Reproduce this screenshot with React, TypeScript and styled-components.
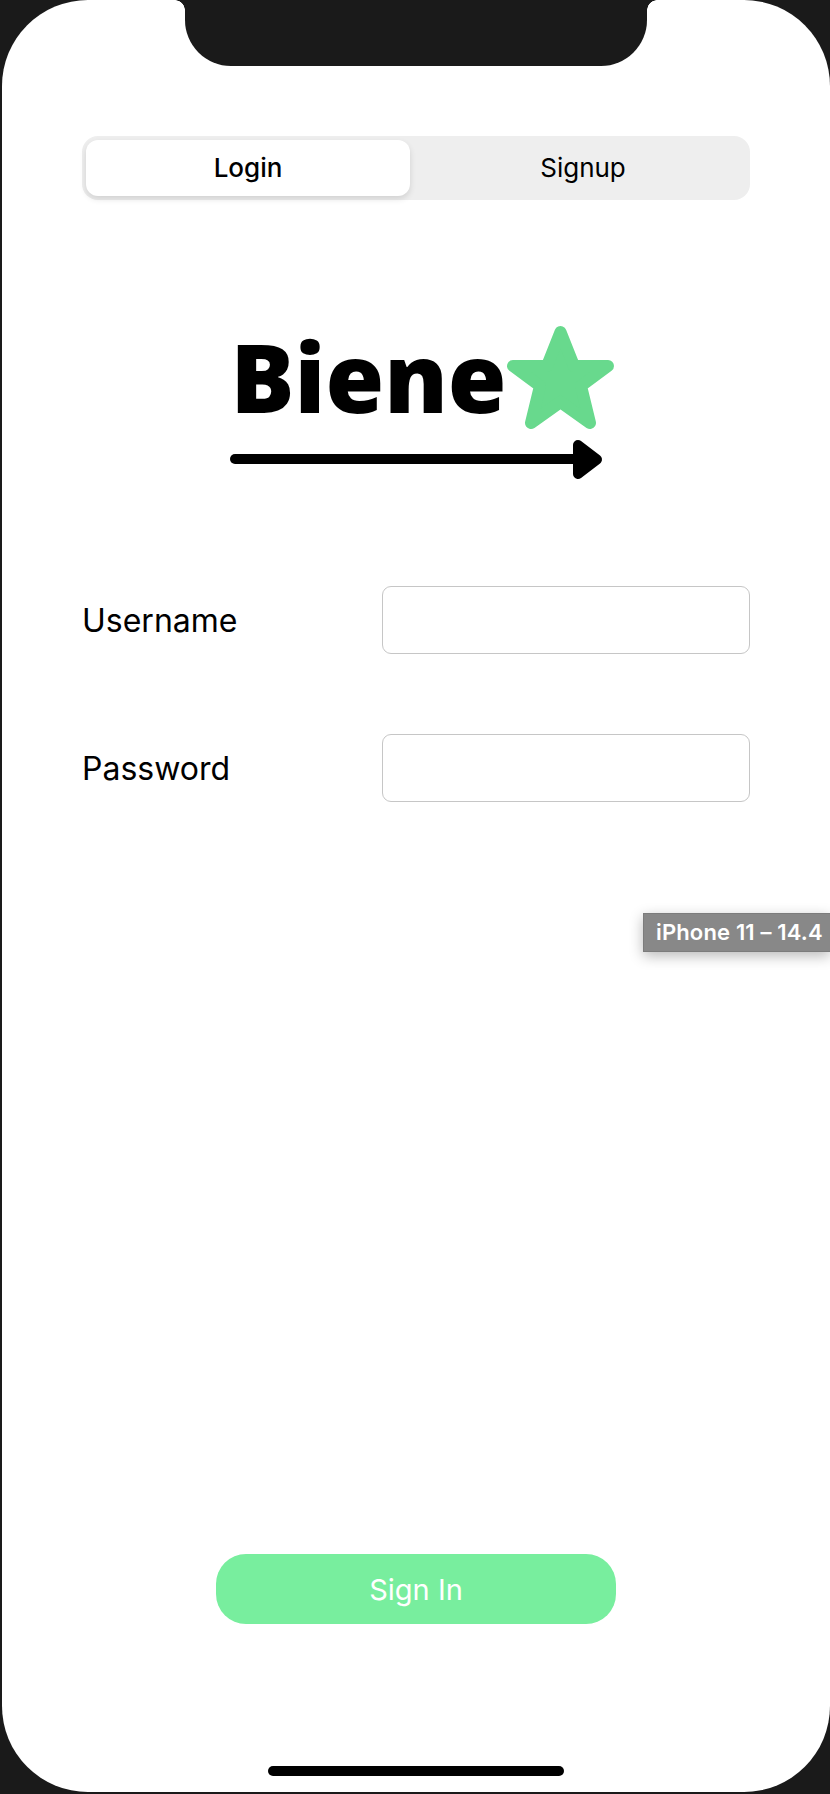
import React from 'react';
import styled, { createGlobalStyle } from 'styled-components';

const BEZEL = '#1a1a1a';

const GlobalStyle = createGlobalStyle`
  html, body {
    margin: 0;
    padding: 0;
    background: ${BEZEL};
  }
  * {
    box-sizing: border-box;
  }
`;

const Screen = styled.main`
  position: relative;
  display: flex;
  flex-direction: column;
  width: 828px;
  height: 1792px;
  margin-left: 2px;
  padding: 136px 80px 16px 80px;
  background: #fff;
  border-radius: 86px;
  font-family: Inter, 'Liberation Sans', sans-serif;
  color: #000;
  overflow: hidden;
`;

const Notch = styled.div`
  position: absolute;
  top: 0;
  left: 183px;
  width: 462px;
  height: 66px;
  background: ${BEZEL};
  border-radius: 0 0 46px 46px;
  &::before,
  &::after {
    content: '';
    position: absolute;
    top: 0;
    width: 10px;
    height: 10px;
  }
  &::before {
    left: -10px;
    background: radial-gradient(circle at 0 100%, transparent 9.5px, ${BEZEL} 10px);
  }
  &::after {
    right: -10px;
    background: radial-gradient(circle at 100% 100%, transparent 9.5px, ${BEZEL} 10px);
  }
`;

const Segmented = styled.div`
  display: grid;
  grid-template-columns: 324px 1fr;
  column-gap: 6px;
  height: 64px;
  padding: 4px 0 4px 4px;
  background: #eeeeee;
  border-radius: 16px;
`;

const Segment = styled.button<{ $active?: boolean }>`
  border: 0;
  padding: 0 0 2px;
  font: inherit;
  font-size: 26px;
  font-weight: ${(p) => (p.$active ? 500 : 400)};
  color: #000;
  border-radius: 12px;
  background: ${(p) => (p.$active ? '#fff' : 'transparent')};
  box-shadow: ${(p) => (p.$active ? '0 3px 6px rgba(0, 0, 0, 0.12)' : 'none')};
`;

const Logo = styled.svg`
  display: block;
  align-self: center;
  width: 412px;
  height: 176px;
  margin-top: 106px;
`;

const LogoText = styled.text`
  font-family: 'Open Sans', sans-serif;
  font-weight: 800;
  font-size: 95px;
  fill: #000;
`;

const Form = styled.form`
  display: flex;
  flex-direction: column;
  gap: 80px;
  margin-top: 104px;
`;

const Field = styled.label`
  display: grid;
  grid-template-columns: 300px 1fr;
  align-items: center;
`;

const FieldLabel = styled.span`
  padding-top: 2px;
  font-size: 32px;
  line-height: 40px;
`;

const TextInput = styled.input`
  height: 68px;
  width: 100%;
  background: #fff;
  border: 1px solid #c6c6c6;
  border-radius: 9px;
`;

const SubmitButton = styled.button`
  align-self: center;
  width: 400px;
  height: 70px;
  margin-top: auto;
  border: 0;
  border-radius: 30px;
  background: #78ee9e;
  color: #fff;
  font: inherit;
  font-size: 29px;
`;

const HomeIndicator = styled.div`
  align-self: center;
  width: 296px;
  height: 10px;
  margin-top: 142px;
  background: #000;
  border-radius: 5px;
`;

const DeviceChip = styled.div`
  position: absolute;
  top: 913px;
  right: 0;
  display: flex;
  align-items: center;
  width: 187px;
  height: 39px;
  padding: 0 0 2px 12px;
  background: #888888;
  border: 1px solid #7c7c7c;
  border-right: 0;
  color: #fff;
  font-size: 22px;
  font-weight: 600;
  letter-spacing: 0.15px;
  white-space: nowrap;
  box-shadow: 0 4px 14px rgba(0, 0, 0, 0.28);
`;

const App = () => (
  <>
    <GlobalStyle />
    <Screen>
      <Notch />
      <Segmented>
        <Segment $active>Login</Segment>
        <Segment>Signup</Segment>
      </Segmented>
      <Logo viewBox="210 306 412 176" role="img" aria-label="Biene">
        <LogoText x="230.5" y="413">
          Biene
        </LogoText>
        <polygon
          points="560.5,332 574,366 608,366 581,386 590,423 560.5,402 531,423 540,386 513,366 547,366"
          fill="#68d98d"
          stroke="#68d98d"
          strokeWidth="12"
          strokeLinejoin="round"
        />
        <line x1="235" y1="459" x2="590" y2="459" stroke="#000" strokeWidth="10" strokeLinecap="round" />
        <polygon
          points="578,445 597,459.5 578,474"
          fill="#000"
          stroke="#000"
          strokeWidth="10"
          strokeLinejoin="round"
        />
      </Logo>
      <Form>
        <Field>
          <FieldLabel>Username</FieldLabel>
          <TextInput type="text" />
        </Field>
        <Field>
          <FieldLabel>Password</FieldLabel>
          <TextInput type="password" />
        </Field>
      </Form>
      <SubmitButton type="button">Sign In</SubmitButton>
      <HomeIndicator />
      <DeviceChip>iPhone 11 – 14.4</DeviceChip>
    </Screen>
  </>
);

export default App;
